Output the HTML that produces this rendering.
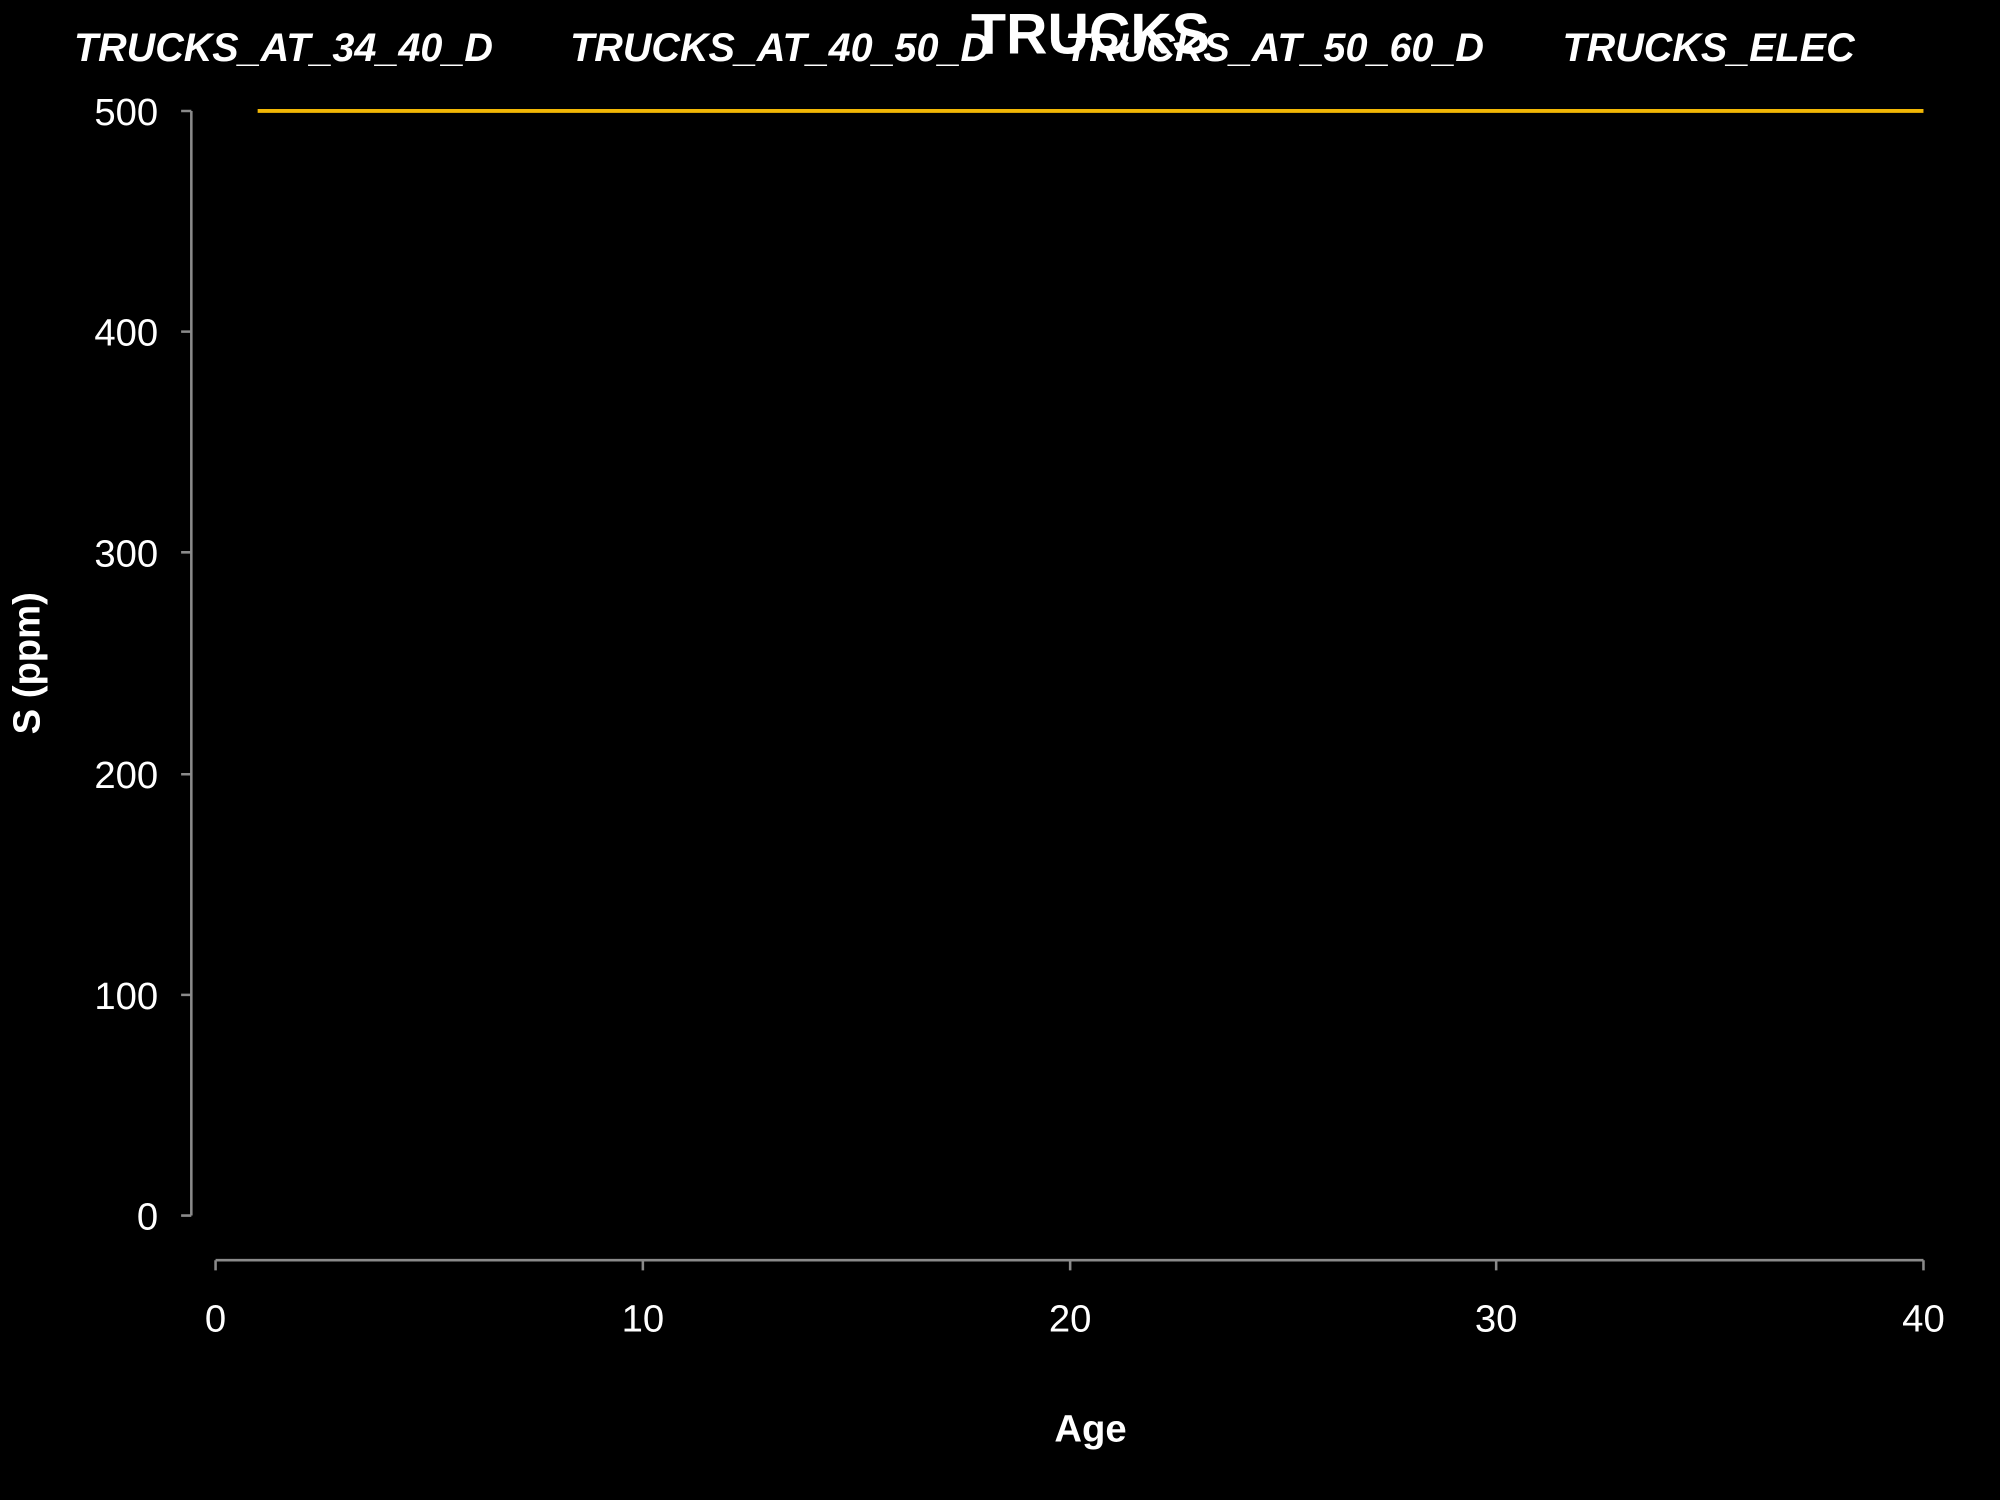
<!DOCTYPE html>
<html><head><meta charset="utf-8"><style>
html,body{margin:0;padding:0;background:#000;}
svg{display:block;}
text{font-family:"Liberation Sans",Arial,sans-serif;fill:#fff;}
</style></head><body>
<svg width="2000" height="1500" viewBox="0 0 1568 1176" xmlns="http://www.w3.org/2000/svg">
<rect width="1568" height="1176" fill="#000"/>
<text x="855" y="42" font-size="45" font-weight="bold" text-anchor="middle">TRUCKS</text>
<g font-size="31" font-weight="bold" font-style="italic">
<text x="58" y="48">TRUCKS_AT_34_40_D</text>
<text x="447" y="48">TRUCKS_AT_40_50_D</text>
<text x="835" y="48">TRUCKS_AT_50_60_D</text>
<text x="1225" y="48">TRUCKS_ELEC</text>
</g>
<g stroke="#8a8a8a" stroke-width="2" fill="none">
<path d="M150 87V953M142 87H150M142 260H150M142 433H150M142 607H150M142 780H150M142 953H150"/>
<path d="M169 988H1508M169 988V996M504 988V996M839 988V996M1173 988V996M1508 988V996"/>
</g>
<g font-size="30" text-anchor="end">
<text x="124" y="98">500</text>
<text x="124" y="271">400</text>
<text x="124" y="444">300</text>
<text x="124" y="618">200</text>
<text x="124" y="791">100</text>
<text x="124" y="964">0</text>
</g>
<g font-size="30" text-anchor="middle">
<text x="169" y="1044">0</text>
<text x="504" y="1044">10</text>
<text x="839" y="1044">20</text>
<text x="1173" y="1044">30</text>
<text x="1508" y="1044">40</text>
</g>
<text x="855" y="1130" font-size="30" font-weight="bold" text-anchor="middle">Age</text>
<text transform="translate(31,520) rotate(-90)" font-size="30" font-weight="bold" text-anchor="middle">S (ppm)</text>
<path d="M202 87H1508" stroke="#f2b705" stroke-width="3"/>
</svg>
</body></html>
